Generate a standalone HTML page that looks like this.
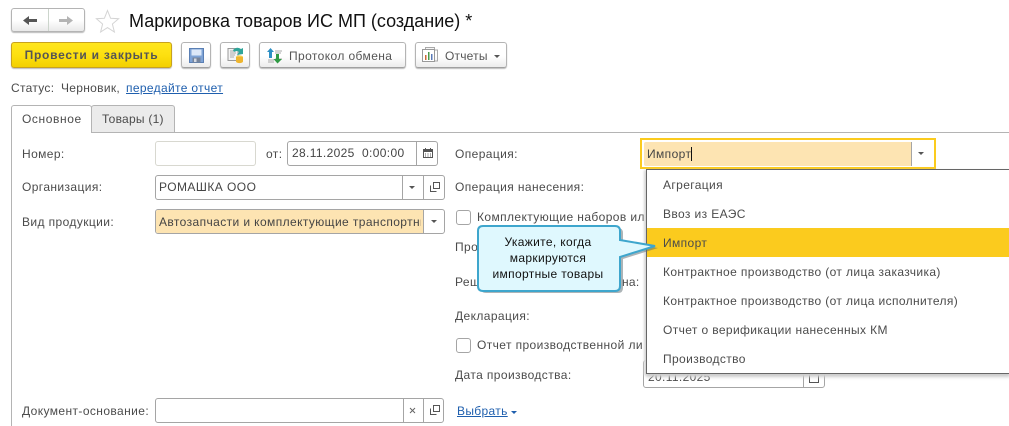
<!DOCTYPE html>
<html lang="ru"><head><meta charset="utf-8"><title>Маркировка товаров</title>
<style>
html,body{margin:0;padding:0;background:#fff}
body{width:1009px;height:426px;position:relative;overflow:hidden;font-family:"Liberation Sans",Arial,sans-serif;font-size:12px;color:#4b4b4b}
.a{position:absolute;white-space:nowrap}
.t{position:absolute;white-space:nowrap;line-height:16px;height:16px;letter-spacing:.4px}
.btn{position:absolute;box-sizing:border-box;top:42px;height:26px;border:1px solid #b4b4b4;border-bottom-color:#a0a0a0;border-radius:3px;background:linear-gradient(#fff 0,#fff 55%,#ececec 100%);box-shadow:0 1px 1px #bbb}
.f{position:absolute;box-sizing:border-box;border:1px solid #a5a5a5;border-radius:3px;background:#fff}
.d{position:absolute;top:0;bottom:0;width:1px;background:#a5a5a5}
.arr{position:absolute;width:0;height:0;border-left:3px solid transparent;border-right:3px solid transparent;border-top:3px solid #555}
.cb{position:absolute;box-sizing:border-box;width:15px;height:15px;border:1px solid #a5a5a5;border-radius:3px;background:#fff}
.it{position:absolute;left:0;right:0;height:29px;line-height:30px;padding-left:16px;letter-spacing:.38px;color:#4b4b4b}
</style></head><body>

<!-- nav -->
<div class="a" style="left:11px;top:8px;width:74px;height:24px;box-sizing:border-box;border:1px solid #b4b4b4;border-radius:3px;background:linear-gradient(#fff 0,#fff 50%,#e9e9e9 100%);box-shadow:0 1px 1px #bbb"></div>
<div class="a" style="left:48px;top:9px;width:1px;height:22px;background:#ccd5cc"></div>
<svg class="a" style="left:23px;top:14px" width="60" height="13"><path d="M0 6.500L6 2V5H14V8H6V11Z" fill="#555"/><path d="M36 5H44V2L50 6.500L44 11V8H36Z" fill="#b4b4b4"/></svg>
<svg class="a" style="left:95px;top:9px" width="25" height="24"><path d="M12.500 1.500L15.600 9.300L23.600 9.700L17.400 15L19.400 23L12.500 18.600L5.600 23L7.600 15L1.400 9.700L9.400 9.300Z" fill="#fff" stroke="#d4d4d4"/></svg>
<div class="a" style="left:129px;top:10px;font-size:18px;line-height:22px;color:#111;letter-spacing:0">Маркировка товаров ИС МП (создание) *</div>

<!-- toolbar -->
<div class="a" style="left:11px;top:42px;width:161px;height:26px;box-sizing:border-box;border:1px solid #c8a21e;border-radius:3px;background:linear-gradient(#ffe61e 0,#fde010 50%,#f3d000 100%);box-shadow:0 1px 1px #bbb;text-align:center;line-height:24px;font-weight:bold;color:#555;letter-spacing:.75px">Провести и закрыть</div>
<div class="btn" style="left:181px;width:30px"></div>
<svg class="a" style="left:189px;top:48px" width="15" height="15"><path d="M0.500 0.500H14.500V14.500H0.500Z" fill="#7ea3d6" stroke="#5a7fb4"/><rect x="2.500" y="1.500" width="10" height="6" fill="#dce8f8"/><rect x="3.500" y="9.500" width="8" height="5" fill="#76849a"/><rect x="5" y="10.500" width="2.500" height="3.500" fill="#d4d9e2"/></svg>
<div class="btn" style="left:220px;width:30px"></div>
<svg class="a" style="left:227px;top:47px" width="18" height="18"><rect x="1" y="1.500" width="10" height="12" fill="#f4f4f4" stroke="#999"/><path d="M3 4H9M3 6H9M3 8H8M3 10H7" stroke="#aaa"/><path d="M6 3Q10 -1 14 2L16 1V7L10 8L12 5Q10 3 7 5Z" fill="#2fa59a"/><ellipse cx="12.500" cy="10" rx="3.500" ry="1.600" fill="#f4cc50"/><path d="M9 10V14.500A3.500 1.600 0 0 0 16 14.500V10Z" fill="#eeb52e"/></svg>
<div class="btn" style="left:259px;width:147px"></div>
<svg class="a" style="left:266px;top:47px" width="18" height="17"><path d="M1 5L4.500 1L8 5H6V11H3V5Z" fill="#2d8fc4"/><path d="M9 4H16M9 6H15M9 12H16M2 13H8M2 15H8" stroke="#aaa"/><path d="M10 7H13V12H16L11.500 16.500L7.500 12H10Z" fill="#2f9a44"/></svg>
<div class="t" style="left:289px;top:48px;color:#555">Протокол обмена</div>
<div class="btn" style="left:415px;width:92px"></div>
<svg class="a" style="left:422px;top:47px" width="17" height="16"><rect x="3.500" y="0.500" width="9" height="12" fill="#f6f6f6" stroke="#aaa"/><rect x="0.500" y="2.500" width="12" height="12" fill="#fff" stroke="#999"/><rect x="3" y="8" width="1.500" height="5" fill="#cc6a3a"/><rect x="6" y="5" width="1.500" height="8" fill="#4a9a4a"/><rect x="9" y="7" width="1.500" height="6" fill="#5a7ab8"/><path d="M13 3H15.500V14H13" fill="none" stroke="#aaa"/></svg>
<div class="t" style="left:445px;top:48px;color:#555;letter-spacing:.2px">Отчеты</div>
<div class="arr" style="left:494px;top:55px"></div>

<!-- status -->
<div class="t" style="left:11px;top:80px;letter-spacing:.3px">Статус:</div>
<div class="t" style="left:61px;top:80px;letter-spacing:.3px">Черновик,</div>
<div class="t" style="left:126px;top:80px;color:#1f5fae;text-decoration:underline;letter-spacing:.34px">передайте отчет</div>

<!-- tabs -->
<div class="a" style="left:91px;top:132px;width:918px;height:1px;background:#b4b4b4"></div>
<div class="a" style="left:91px;top:105px;width:84px;height:27px;box-sizing:border-box;border:1px solid #b4b4b4;border-bottom:0;border-radius:3px 3px 0 0;background:#ebebeb"></div>
<div class="a" style="left:11px;top:105px;width:81px;height:28px;box-sizing:border-box;border:1px solid #b4b4b4;border-bottom:0;border-radius:3px 3px 0 0;background:#fff"></div>
<div class="a" style="left:11px;top:133px;width:1px;height:293px;background:#b4b4b4"></div>
<div class="t" style="left:22px;top:111px;letter-spacing:.6px">Основное</div>
<div class="t" style="left:102px;top:111px;letter-spacing:.25px">Товары (1)</div>

<!-- left fields -->
<div class="t" style="left:22px;top:146px">Номер:</div>
<div class="f" style="left:155px;top:141px;width:101px;height:25px;border-color:#d8d8d0"></div>
<div class="t" style="left:266px;top:146px">от:</div>
<div class="f" style="left:287px;top:141px;width:151px;height:25px;border-color:#a5a5a5"><div class="d" style="left:128px"></div></div>
<div class="t" style="left:292px;top:145px;color:#444;letter-spacing:.35px;white-space:pre">28.11.2025  0:00:00</div>
<svg class="a" style="left:422px;top:147px" width="13" height="12"><path d="M1.500 2.500H10.500V10.500H1.500Z" fill="#fff" stroke="#555"/><rect x="1" y="2" width="10" height="3" fill="#555"/><path d="M3 7H4M5.500 7H6.500M8 7H9M3 9H4M5.500 9H6.500M8 9H9" stroke="#555"/><path d="M3.500 1V3M8.500 1V3" stroke="#555"/></svg>

<div class="t" style="left:22px;top:179px">Организация:</div>
<div class="f" style="left:155px;top:175px;width:290px;height:25px"><div class="d" style="left:246px"></div><div class="d" style="left:267px"></div></div>
<div class="t" style="left:159px;top:179px;color:#444;letter-spacing:.45px">РОМАШКА ООО</div>
<div class="arr" style="left:409px;top:186px"></div>
<svg class="a" style="left:430px;top:182px" width="11" height="11"><path d="M3.500 0.500H9.500V6.500H3.500ZM0.500 3.500V9.500H6.500" fill="none" stroke="#555"/></svg>

<div class="t" style="left:22px;top:214px">Вид продукции:</div>
<div class="f" style="left:155px;top:209px;width:290px;height:25px"><div class="a" style="left:0;top:0;width:267px;height:23px;background:#fde4b2;border-radius:2px 0 0 2px"></div><div class="d" style="left:267px"></div></div>
<div class="a" style="left:159px;top:214px;width:262px;overflow:hidden;line-height:16px;letter-spacing:.4px;color:#444">Автозапчасти и комплектующие транспортных средств</div>
<div class="arr" style="left:431px;top:220px"></div>

<div class="t" style="left:22px;top:403px">Документ-основание:</div>
<div class="f" style="left:155px;top:398px;width:289px;height:25px"><div class="d" style="left:247px"></div><div class="d" style="left:267px"></div></div>
<svg class="a" style="left:409px;top:407px" width="8" height="8"><path d="M1 1L6 6M6 1L1 6" stroke="#666"/></svg>
<svg class="a" style="left:430px;top:405px" width="11" height="11"><path d="M3.500 0.500H9.500V6.500H3.500ZM0.500 3.500V9.500H6.500" fill="none" stroke="#555"/></svg>
<div class="t" style="left:457px;top:403px;color:#1f5fae;text-decoration:underline;letter-spacing:.34px">Выбрать</div>
<div class="arr" style="left:511px;top:411px;border-top-color:#1f5fae"></div>

<!-- middle -->
<div class="t" style="left:455px;top:146px">Операция:</div>
<div class="t" style="left:455px;top:179px">Операция нанесения:</div>
<div class="cb" style="left:456px;top:210px"></div>
<div class="t" style="left:477px;top:209px">Комплектующие наборов ил</div>
<div class="t" style="left:455px;top:239px">Про</div>
<div class="t" style="left:455px;top:274px">Реш</div>
<div class="t" style="left:455px;top:308px">Декларация:</div>
<div class="cb" style="left:456px;top:338px"></div>
<div class="t" style="left:477px;top:337px">Отчет производственной ли</div>
<div class="t" style="left:455px;top:367px">Дата производства:</div>
<div class="f" style="left:643px;top:360px;width:182px;height:28px"><div class="d" style="left:159px"></div></div>
<div class="t" style="left:648px;top:369px;letter-spacing:.35px">20.11.2025</div>
<svg class="a" style="left:808px;top:372px" width="13" height="12"><path d="M1.500 2.500H10.500V10.500H1.500Z" fill="#fff" stroke="#555"/></svg>

<!-- operation -->
<div class="a" style="left:640px;top:138px;width:296px;height:31px;box-sizing:border-box;border:2px solid #fbcb1e;background:#fff"></div>
<div class="a" style="left:644px;top:142px;width:268px;height:24px;background:#fde4b2;border-radius:2px 0 0 2px"></div>
<div class="a" style="left:911px;top:142px;width:1px;height:24px;background:#a5a5a5"></div>
<div class="t" style="left:647px;top:146px;color:#444">Импорт</div>
<div class="a" style="left:691px;top:147px;width:1px;height:14px;background:#111"></div>
<div class="arr" style="left:918px;top:152px"></div>

<!-- dropdown -->
<div class="a" style="left:646px;top:169px;width:364px;height:205px;box-sizing:border-box;border:1px solid #666;background:#fff;box-shadow:0 3px 3px #ccc,-2px 1px 2px #ddd">
<div class="it" style="top:0">Агрегация</div>
<div class="it" style="top:29px">Ввоз из ЕАЭС</div>
<div class="it" style="top:58px;background:#fbcb1e">Импорт</div>
<div class="it" style="top:87px">Контрактное производство (от лица заказчика)</div>
<div class="it" style="top:116px">Контрактное производство (от лица исполнителя)</div>
<div class="it" style="top:145px">Отчет о верификации нанесенных КМ</div>
<div class="it" style="top:174px">Производство</div>
</div>

<!-- callout -->
<svg class="a" style="left:474px;top:222px" width="192" height="76">
<path d="M9 4H141Q146 4 146 9V18L181 24L146 35V64Q146 69 141 69H9Q4 69 4 64V9Q4 4 9 4Z" fill="#5a6a70" opacity=".5" transform="translate(3,2)"/>
<path d="M9 4H141Q146 4 146 9V18L181 24L146 35V64Q146 69 141 69H9Q4 69 4 64V9Q4 4 9 4Z" fill="#dff8fe" stroke="#3ea6cd" stroke-width="2"/>
</svg>
<div class="t" style="left:622px;top:274px;letter-spacing:.3px">на:</div>
<div class="a" style="left:477px;top:234px;width:142px;text-align:center;line-height:16px;color:#111;letter-spacing:.34px">Укажите, когда<br>маркируются<br>импортные товары</div>

</body></html>
